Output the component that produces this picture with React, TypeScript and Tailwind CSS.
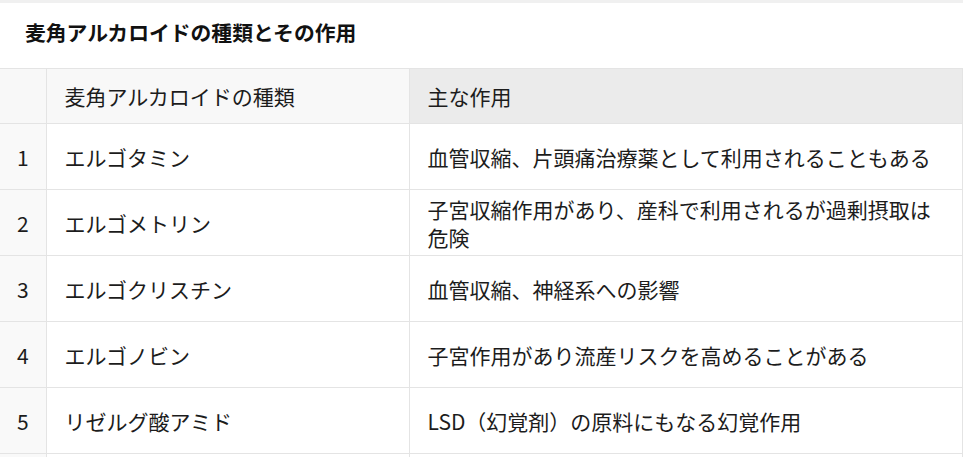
import React from "react";

const rows: [string, string, string][] = [
  ["1", "エルゴタミン", "血管収縮、片頭痛治療薬として利用されることもある"],
  ["2", "エルゴメトリン", "子宮収縮作用があり、産科で利用されるが過剰摂取は危険"],
  ["3", "エルゴクリスチン", "血管収縮、神経系への影響"],
  ["4", "エルゴノビン", "子宮作用があり流産リスクを高めることがある"],
  ["5", "リゼルグ酸アミド", "LSD（幻覚剤）の原料にもなる幻覚作用"],
];

export default function App() {
  return (
    <div
      className="w-[963px] h-[457px] overflow-hidden bg-white border-t-[3px] border-[#f0f0f0] text-[#1c1c1c]"
      style={{ fontFamily: '"Noto Sans CJK JP", "Noto Sans", sans-serif' }}
    >
      <div className="h-[65px] pt-[15px] pl-[25px] text-[20.8px] leading-[28px] font-bold text-[#111]">
        麦角アルカロイドの種類とその作用
      </div>
      <table className="border-collapse table-fixed w-[962px] text-[21px] leading-[28px]">
        <colgroup>
          <col className="w-[46px]" />
          <col className="w-[363px]" />
          <col className="w-[553px]" />
        </colgroup>
        <thead>
          <tr className="h-[55px]">
            <th className="bg-[#f8f8f8] border border-[#e4e4e4] border-l-0"></th>
            <th className="bg-[#f8f8f8] border border-[#e4e4e4] text-left font-normal pl-[18px] align-middle">
              麦角アルカロイドの種類
            </th>
            <th className="bg-[#ebebeb] border border-[#e4e4e4] text-left font-normal pl-[18px] align-middle">
              主な作用
            </th>
          </tr>
        </thead>
        <tbody>
          {rows.map(([n, name, effect]) => (
            <tr key={n} className="h-[66px]">
              <td className="bg-[#f9f9f9] border border-[#e4e4e4] border-l-0 text-center align-middle">
                {n}
              </td>
              <td className="border border-[#e4e4e4] pl-[18px] align-middle">{name}</td>
              <td className="border border-[#e4e4e4] pl-[18px] pr-[14px] align-middle">{effect}</td>
            </tr>
          ))}
          <tr className="h-[66px]">
            <td className="bg-[#f9f9f9] border border-[#e4e4e4] border-l-0"></td>
            <td className="border border-[#e4e4e4]"></td>
            <td className="border border-[#e4e4e4]"></td>
          </tr>
        </tbody>
      </table>
    </div>
  );
}
